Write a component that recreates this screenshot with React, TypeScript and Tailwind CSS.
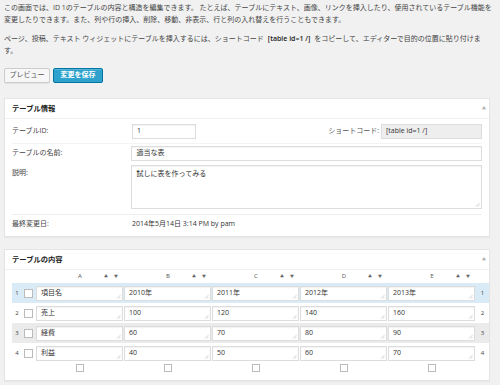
import React from "react";

const Handle = () => (
  <svg className="absolute right-[1px] bottom-[1px]" width="5" height="5" viewBox="0 0 5 5">
    <path d="M4.5 1 L1 4.5 M4.5 3 L3 4.5" stroke="#b5b5b5" strokeWidth="0.6" fill="none" />
  </svg>
);

const Cell = ({ v }: { v: string }) => (
  <div className="pr-[1px]">
    <div className="relative h-[15px] bg-white border border-[#dcdcdc] shadow-[inset_0_1px_1px_rgba(0,0,0,0.05)] pl-[4px] flex items-center text-[#333] whitespace-nowrap">
      {v}
      <Handle />
    </div>
  </div>
);

const Box = ({ cls = "" }: { cls?: string }) => (
  <div className={"w-[9px] h-[9px] bg-white border border-[#bbb] " + cls} />
);

const rows: { n: number; cells: string[]; bg: string }[] = [
  { n: 1, cells: ["項目名", "2010年", "2011年", "2012年", "2013年"], bg: "bg-[#d9ebf7]" },
  { n: 2, cells: ["売上", "100", "120", "140", "160"], bg: "bg-white" },
  { n: 3, cells: ["経費", "60", "70", "80", "90"], bg: "bg-[#ebebeb]" },
  { n: 4, cells: ["利益", "40", "50", "60", "70"], bg: "bg-white" },
];

const cols = ["A", "B", "C", "D", "E"];

const PanelHeader = ({ title }: { title: string }) => (
  <div className="h-[20px] flex items-center justify-between pl-[7px] pr-[3px] border-b border-[#f0f0f0]">
    <span className="font-bold text-[7.3px] text-[#222]">{title}</span>
    <span className="text-[4px] text-[#aaa]">▲</span>
  </div>
);

export default function App() {
  return (
    <div className="w-[500px] h-[385px] overflow-hidden bg-[#f1f1f1] text-[#444] px-[4px] font-['Open_Sans','Noto_Sans_CJK_JP',sans-serif] text-[7px]">
      <div className="pt-[2px] leading-[12px] whitespace-nowrap">
        <div>この画面では、ID 1のテーブルの内容と構造を編集できます。 たとえば、テーブルにテキスト、画像、リンクを挿入したり、使用されているテーブル機能を</div>
        <div>変更したりできます。また、列や行の挿入、削除、移動、非表示、行と列の入れ替えを行うこともできます。</div>
      </div>
      <div className="mt-[7px] leading-[12px] whitespace-nowrap">
        <div>
          ページ、投稿、テキスト ウィジェットにテーブルを挿入するには、ショートコード
          <span className="text-[#222] font-semibold mx-[4px]">[table id=1 /]</span>
          をコピーして、エディターで目的の位置に貼り付けま
        </div>
        <div>す。</div>
      </div>
      <div className="mt-[11px] flex gap-[3px]">
        <div className="w-[46px] h-[15px] flex items-center justify-center bg-[#f7f7f7] border border-[#cccccc] rounded-[2px] text-[#555] shadow-[0_1px_0_rgba(0,0,0,0.06)]">
          プレビュー
        </div>
        <div className="w-[50px] h-[15px] flex items-center justify-center bg-[#2ea2cc] border border-[#0074a2] rounded-[2px] text-white font-semibold shadow-[inset_0_1px_0_rgba(120,200,230,0.5)]">
          変更を保存
        </div>
      </div>

      <div className="mt-[15px] w-[486px] bg-white border border-[#e5e5e5] shadow-[0_1px_1px_rgba(0,0,0,0.04)]">
        <PanelHeader title="テーブル情報" />
        <div className="pl-[7px] pr-[7px] text-[#444]">
          <div className="pt-[5px] pb-[4px] flex items-center border-b border-[#f3f3f3]">
            <div className="w-[120px]">テーブルID:</div>
            <div className="w-[64px] h-[15px] border border-[#ddd] pl-[4px] flex items-center text-[#333] shadow-[inset_0_1px_1px_rgba(0,0,0,0.05)]">1</div>
            <div className="ml-auto mr-[2px] text-[#555]">ショートコード:</div>
            <div className="w-[101px] h-[15px] border border-[#ddd] bg-[#eeeeee] pl-[4px] flex items-center text-[#333]">[table id=1 /]</div>
          </div>
          <div className="pt-[2px] flex items-center">
            <div className="w-[120px]">テーブルの名前:</div>
            <div className="w-[352px] h-[15px] border border-[#ddd] pl-[4px] flex items-center text-[#333] shadow-[inset_0_1px_1px_rgba(0,0,0,0.05)]">適当な表</div>
          </div>
          <div className="pt-[4px] pb-[5px] flex border-b border-[#eeeeee]">
            <div className="w-[120px] pt-[3px]">説明:</div>
            <div className="relative w-[352px] h-[44px] border border-[#ddd] pl-[4px] pt-[3px] text-[#333] shadow-[inset_0_1px_1px_rgba(0,0,0,0.05)]">
              試しに表を作ってみる
              <Handle />
            </div>
          </div>
          <div className="pt-[3px] pb-[6px] flex leading-[12px]">
            <div className="w-[120px]">最終変更日:</div>
            <div className="text-[#333]">2014年5月14日 3:14 PM by pam</div>
          </div>
        </div>
      </div>

      <div className="mt-[12px] w-[486px] bg-white border border-[#e5e5e5] shadow-[0_1px_1px_rgba(0,0,0,0.04)]">
        <PanelHeader title="テーブルの内容" />
        <div className="pl-[7px] pb-[8px]">
          <div className="grid grid-cols-[10px_14px_88px_88px_88px_88px_88px_13px]">
            <div className="h-[13px]" />
            <div />
            {cols.map((c) => (
              <div key={c} className="relative h-[13px] flex items-center justify-center text-[6px] text-[#555]">
                {c}
                <span className="absolute right-[6px] top-0 h-[13px] flex items-center gap-[6px] text-[4px] text-[#666]">
                  <span>▲</span>
                  <span>▼</span>
                </span>
              </div>
            ))}
            <div />
            {rows.map((r) => (
              <React.Fragment key={r.n}>
                <div className={"h-[20px] flex items-center justify-center text-[6px] text-[#444] " + r.bg}>{r.n}</div>
                <div className={"h-[20px] flex items-center pl-[2px] " + r.bg}>
                  <Box />
                </div>
                {r.cells.map((v, i) => (
                  <div key={i} className={"h-[20px] flex flex-col justify-center " + r.bg}>
                    <Cell v={v} />
                  </div>
                ))}
                <div className={"h-[20px] flex items-center justify-center text-[6px] text-[#444] " + r.bg}>{r.n}</div>
              </React.Fragment>
            ))}
            <div className="h-[9px]" />
            <div />
            {cols.map((c) => (
              <div key={c} className="h-[9px] pt-[1px] flex justify-center">
                <div className="w-[8px] h-[8px] border border-[#bbb] bg-white" />
              </div>
            ))}
            <div />
          </div>
        </div>
      </div>
    </div>
  );
}
